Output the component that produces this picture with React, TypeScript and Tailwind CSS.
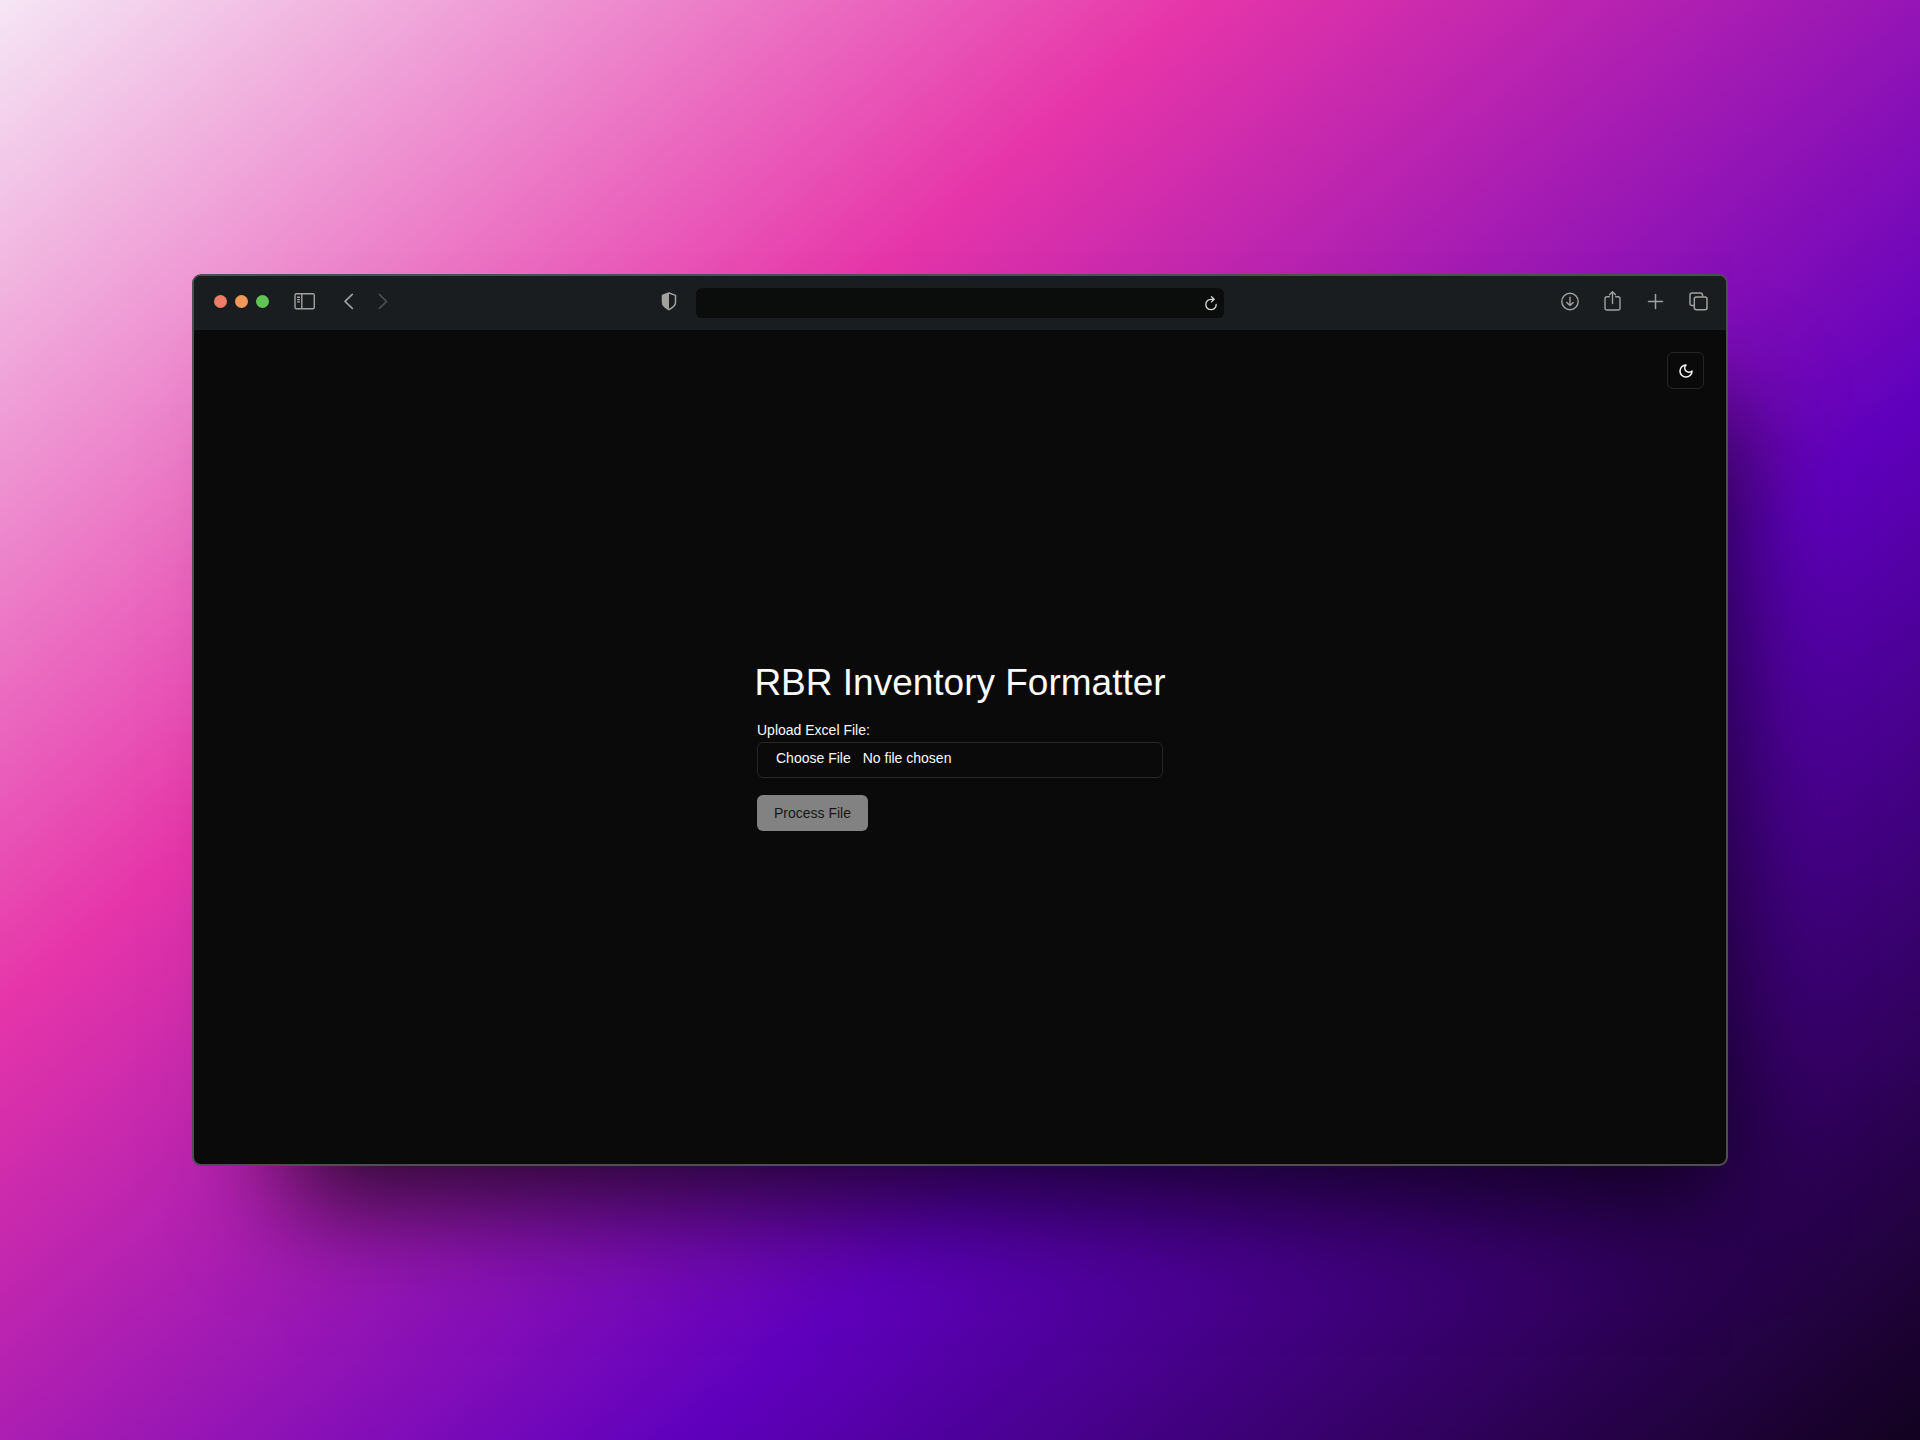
import { useRef, useState } from "react";

const iconButton = "flex shrink-0 items-center justify-center text-[#a3a19e]";

function TitleBar() {
  return (
    <header className="grid h-[54px] shrink-0 grid-cols-[1fr_598px_1fr] items-center bg-[#1a1d1f] pb-1">
      <div className="flex items-center pl-5">
        <div className="flex gap-2">
          <span className="size-[13px] rounded-full bg-[#ee7d68]" />
          <span className="size-[13px] rounded-full bg-[#f09859]" />
          <span className="size-[13px] rounded-full bg-[#61c454]" />
        </div>
        <button aria-label="Toggle sidebar" className={`${iconButton} ml-6`}>
          <svg width="24" height="18" viewBox="0 0 24 18" fill="none" stroke="currentColor" strokeWidth="1.4">
            <rect x="2" y="1.8" width="19.3" height="15" rx="1.5" />
            <path d="M8.8 1.8v15M4 5.3h3M4 7.6h3M4 9.9h3" />
          </svg>
        </button>
        <button aria-label="Back" className={`${iconButton} ml-6`}>
          <svg width="14" height="18" viewBox="0 0 14 18" fill="none" stroke="currentColor" strokeWidth="1.6" strokeLinecap="round" strokeLinejoin="round">
            <path d="m11.300 2.400-7.300 7 7.300 7" />
          </svg>
        </button>
        <button aria-label="Forward" disabled className="ml-[21px] flex text-[#4c4d4d]">
          <svg width="14" height="18" viewBox="0 0 14 18" fill="none" stroke="currentColor" strokeWidth="1.6" strokeLinecap="round" strokeLinejoin="round">
            <path d="m3.300 2.400 7.300 7-7.300 7" />
          </svg>
        </button>
      </div>

      <div className="flex items-center gap-[19px]">
        <button aria-label="Privacy report" className={iconButton}>
          <svg width="16" height="20" viewBox="0 0 16 20" fill="none" stroke="currentColor" strokeWidth="1.5">
            <path d="M8 2 14.500 4.400v7.200c0 3.200-2.600 5-6.500 7.100-3.900-2.100-6.500-3.900-6.500-7.100V4.400Z" strokeLinejoin="round" />
            <path d="M8 2v16.700c-3.900-2.100-6.500-3.900-6.500-7.100V4.400Z" fill="currentColor" stroke="none" />
          </svg>
        </button>
        <div className="mt-1 flex h-[30px] flex-1 items-center rounded-md bg-[#0b0c0c]">
          <input aria-label="Address" className="min-w-0 flex-1 bg-transparent px-3 text-sm text-white outline-none" />
          <button aria-label="Reload" className="mr-1.5 flex text-[#dcdcdc]">
            <svg width="14" height="16" viewBox="0 0 14 16" fill="none" stroke="currentColor" strokeWidth="1.3" strokeLinecap="round" strokeLinejoin="round">
              <path d="M9.800 4.300H7a5.200 5.200 0 1 0 5.200 5.200" />
              <path d="M7.500 1.700 10.100 4.300 7.500 6.900" />
            </svg>
          </button>
        </div>
        <span className="w-4" />
      </div>

      <div className="flex items-center justify-end gap-[21px] pr-[17px]">
        <button aria-label="Downloads" className={iconButton}>
          <svg width="22" height="22" viewBox="0 0 22 22" fill="none" stroke="currentColor" strokeWidth="1.4" strokeLinecap="round" strokeLinejoin="round">
            <circle cx="12" cy="11.500" r="8.200" />
            <path d="M12 7.200v8.300M8.800 12.400l3.200 3.200 3.200-3.200" />
          </svg>
        </button>
        <button aria-label="Share" className={iconButton}>
          <svg width="22" height="22" viewBox="0 0 22 22" fill="none" stroke="currentColor" strokeWidth="1.4" strokeLinecap="round" strokeLinejoin="round">
            <path d="M8.300 6.800H5.700A1.700 1.700 0 0 0 4 8.500v9.800a1.700 1.700 0 0 0 1.700 1.700h11.600a1.700 1.700 0 0 0 1.700-1.700V8.500a1.700 1.700 0 0 0-1.700-1.700h-2.600" />
            <path d="M11.500 13.500V1.700M8.500 4.700l3-3 3 3" />
          </svg>
        </button>
        <button aria-label="New tab" className={iconButton}>
          <svg width="22" height="22" viewBox="0 0 22 22" fill="none" stroke="currentColor" strokeWidth="1.5" strokeLinecap="round">
            <path d="M11.500 4.500v14M4.500 11.500h14" />
          </svg>
        </button>
        <button aria-label="Tab overview" className={iconButton}>
          <svg width="22" height="22" viewBox="0 0 22 22" fill="none" stroke="currentColor" strokeWidth="1.5">
            <rect x="7.300" y="7" width="12.700" height="12.700" rx="2" />
            <path d="M7 15.500H5a2 2 0 0 1-2-2V5a2 2 0 0 1 2-2h8.500a2 2 0 0 1 2 2v1.800" />
          </svg>
        </button>
      </div>
    </header>
  );
}

function UploadForm() {
  const picker = useRef<HTMLInputElement>(null);
  const [fileName, setFileName] = useState("");
  return (
    <form className="flex w-[406px] flex-col items-start" onSubmit={(e) => e.preventDefault()}>
      <h1 className="self-center text-[37px] leading-10 whitespace-nowrap text-neutral-50">RBR Inventory Formatter</h1>
      <label htmlFor="excel" className="mt-[17px] text-sm leading-5 text-neutral-50">
        Upload Excel File:
      </label>
      <div className="mt-0.5 flex h-9 w-full items-start rounded-md border border-[#262626] px-[18px] py-[5px] text-sm leading-5 text-neutral-50">
        <button type="button" onClick={() => picker.current?.click()}>
          Choose File
        </button>
        <span className="ml-3">{fileName || "No file chosen"}</span>
        <input
          ref={picker}
          id="excel"
          type="file"
          accept=".xls,.xlsx"
          className="sr-only"
          onChange={(e) => setFileName(e.target.files?.[0]?.name ?? "")}
        />
      </div>
      <button type="submit" className="mt-[17px] h-9 rounded-md bg-[#828282] px-[17px] text-sm text-[#171717]">
        Process File
      </button>
    </form>
  );
}

export default function App() {
  return (
    <div className="flex min-h-screen items-center justify-center bg-[linear-gradient(140deg,#f5e6f5_0%,#e635a9_33%,#5f00bd_66%,#12021f_100%)] font-['Liberation_Sans',Arial,sans-serif]">
      <div className="flex aspect-[1536/892] w-4/5 flex-col overflow-hidden rounded-[9px] border-2 border-[#4d4f50] bg-[#0a0a0a] shadow-[48px_84px_100px_-44px_rgba(0,0,0,0.75)]">
        <TitleBar />
        <main className="relative flex flex-1 items-center justify-center">
          <button
            aria-label="Toggle theme"
            className="absolute top-[22px] right-[22px] flex size-[37px] items-center justify-center rounded-md border border-[#262626] text-neutral-50"
          >
            <svg width="16" height="16" viewBox="0 0 24 24" fill="none" stroke="currentColor" strokeWidth="2.3" strokeLinecap="round" strokeLinejoin="round">
              <path d="M12 3a6 6 0 0 0 9 9 9 9 0 1 1-9-9Z" />
            </svg>
          </button>
          <UploadForm />
        </main>
      </div>
    </div>
  );
}
